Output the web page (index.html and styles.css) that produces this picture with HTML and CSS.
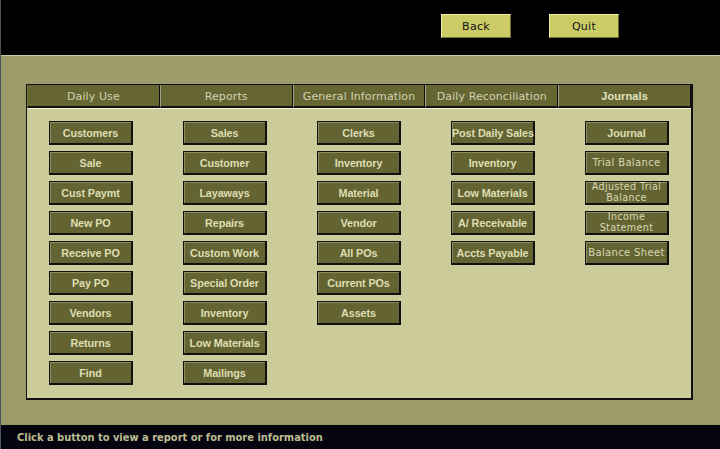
FILE: index.html
```html
<!DOCTYPE html>
<html lang="en">
<head>
  <meta charset="UTF-8" />
  <title>Main Menu</title>
  <link rel="stylesheet" href="styles.css">
</head>
<body>
  <div class="topbar">
    <button class="nav-btn">Back</button>
    <button class="nav-btn">Quit</button>
  </div>

  <div class="main">
    <div class="panel">
      <div class="tabs">
        <div class="tab">Daily Use</div>
        <div class="tab">Reports</div>
        <div class="tab">General Information</div>
        <div class="tab">Daily Reconciliation</div>
        <div class="tab active">Journals</div>
      </div>
      <div class="content">
        <div class="col">
          <button class="btn">Customers</button>
          <button class="btn">Sale</button>
          <button class="btn">Cust Paymt</button>
          <button class="btn">New PO</button>
          <button class="btn">Receive PO</button>
          <button class="btn">Pay PO</button>
          <button class="btn">Vendors</button>
          <button class="btn">Returns</button>
          <button class="btn">Find</button>
        </div>
        <div class="col">
          <button class="btn">Sales</button>
          <button class="btn">Customer</button>
          <button class="btn">Layaways</button>
          <button class="btn">Repairs</button>
          <button class="btn">Custom Work</button>
          <button class="btn">Special Order</button>
          <button class="btn">Inventory</button>
          <button class="btn">Low Materials</button>
          <button class="btn">Mailings</button>
        </div>
        <div class="col">
          <button class="btn">Clerks</button>
          <button class="btn">Inventory</button>
          <button class="btn">Material</button>
          <button class="btn">Vendor</button>
          <button class="btn">All POs</button>
          <button class="btn">Current POs</button>
          <button class="btn">Assets</button>
        </div>
        <div class="col">
          <button class="btn">Post Daily Sales</button>
          <button class="btn">Inventory</button>
          <button class="btn">Low Materials</button>
          <button class="btn">A/ Receivable</button>
          <button class="btn">Accts Payable</button>
        </div>
        <div class="col">
          <button class="btn">Journal</button>
          <button class="btn plain">Trial Balance</button>
          <button class="btn plain two">Adjusted Trial<br>Balance</button>
          <button class="btn plain two">Income<br>Statement</button>
          <button class="btn plain">Balance Sheet</button>
        </div>
      </div>
    </div>
  </div>

  <div class="status">Click a button to view a report or for more information</div>
</body>
</html>
```

FILE: styles.css
```css
body { margin: 0; width: 720px; height: 449px; background: #000; border-left: 1px solid #4e545c; box-sizing: border-box; font-family: "DejaVu Sans", sans-serif; overflow: hidden; }

.topbar { height: 55px; box-sizing: border-box; background: #000; display: flex; justify-content: flex-end; gap: 38px; padding: 14px 101px 0 0; }
.nav-btn { width: 70px; height: 24px; background: #cccc66; color: #111; font-family: "DejaVu Sans", sans-serif; font-size: 11px; border: 1px solid; border-color: #eeeea8 #6e6e30 #6e6e30 #eeeea8; padding: 0; letter-spacing: 0.3px; }

.main { height: 370px; box-sizing: border-box; background: #9c9b69; border-top: 1px solid #c9c8a2; padding: 28px 0 0 25px; }

.panel { width: 667px; height: 316px; box-sizing: border-box; border: 1px solid #111; border-right-width: 2px; border-bottom-width: 2px; background: #cccc9a; display: flex; flex-direction: column; }

.tabs { display: flex; background: #111; border-bottom: 1px solid #f2f2dc; }
.tab { width: 133px; height: 23px; box-sizing: border-box; background: #666633; border-left: 1px solid #a3a38a; border-right: 1px solid #111; border-bottom: 2px solid #111; color: #d2d2b2; font-size: 11px; letter-spacing: 0.1px; display: flex; align-items: center; justify-content: center; padding-top: 1px; }
.tab:first-child { border-left-color: #777744; }
.tab.active { font-family: "Liberation Sans", sans-serif; font-weight: bold; color: #e2e2c2; }

.content { display: flex; gap: 50px; padding: 12px 0 0 22px; }
.col { width: 84px; display: flex; flex-direction: column; gap: 6px; }

.btn { width: 84px; height: 24px; box-sizing: border-box; padding: 0; background: #646433; color: #dedeb2; font-family: "Liberation Sans", sans-serif; font-weight: bold; font-size: 10.8px; border: 1px solid #111; border-right-width: 2px; border-bottom-width: 2px; box-shadow: inset 1px 1px 0 #8d8d5c; white-space: nowrap; letter-spacing: -0.1px; }
.btn.plain { font-family: "DejaVu Sans", sans-serif; font-weight: normal; font-size: 10px; letter-spacing: 0.35px; color: #d8d8b4; }
.btn.two { line-height: 10.5px; font-size: 9.6px; }

.status { height: 24px; box-sizing: border-box; background: #050510; color: #bdbd92; font-family: "DejaVu Sans Condensed", "DejaVu Sans", sans-serif; font-size: 11px; font-weight: bold; padding: 6px 0 0 16px; }
```
